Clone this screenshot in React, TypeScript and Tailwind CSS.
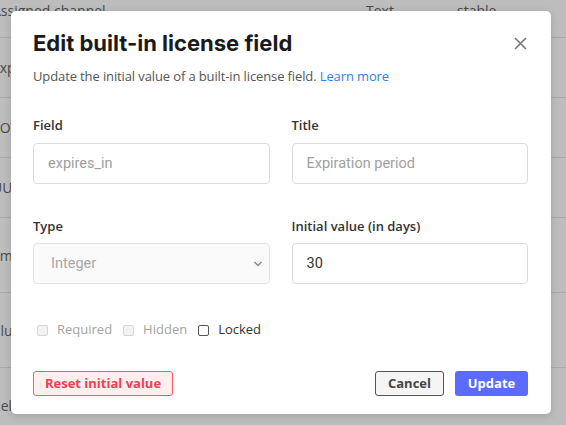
import React from "react";

const bgRows = [
  { h: "h-[38px]", name: "Assigned channel", type: "Text", status: "stable", top: true },
  { h: "h-[60px]", name: "Expires_in", type: "", status: "" },
  { h: "h-[60px]", name: "TOTP", type: "", status: "" },
  { h: "h-[60px]", name: "UUID", type: "", status: "" },
  { h: "h-[75px]", name: "Email", type: "", status: "" },
  { h: "h-[75px]", name: "Plugins", type: "", status: "" },
  { h: "h-[75px]", name: "Release", type: "", status: "" },
];

function Checkbox({ label, disabled }: { label: string; disabled?: boolean }) {
  return (
    <label className="flex items-center">
      <span
        className={`ml-[4px] mr-[9px] h-[11px] w-[11px] rounded-[2px] border ${
          disabled ? "border-[#d6d6d6] bg-[#f2f2f2]" : "border-[#555] bg-white"
        }`}
      />
      <span className={disabled ? "text-[#a3a3a3]" : "text-[#333]"}>{label}</span>
    </label>
  );
}

export default function App() {
  return (
    <div
      className="relative h-[425px] w-[566px] overflow-hidden bg-[#bdbdbd]"
      style={{ fontFamily: '"Open Sans", sans-serif' }}
    >
      {/* background table behind the overlay */}
      <div className="flex flex-col">
        {bgRows.map((r, i) => (
          <div
            key={i}
            className={`${r.h} flex border-b border-[#a9a9a9] text-[14px] text-[#4a4a4a] ${
              r.top ? "items-start" : "items-center"
            }`}
          >
            <span className="ml-[-8px] w-[374px]">{r.name}</span>
            <span className="w-[91px]">{r.type}</span>
            <span>{r.status}</span>
          </div>
        ))}
      </div>

      {/* modal */}
      <div className="absolute left-[11px] top-[11px] flex h-[403px] w-[540px] flex-col rounded-[5px] bg-white pl-[22px] pr-[23px] pt-[17px] shadow-[0_2px_8px_rgba(0,0,0,0.15)]">
        <div className="flex items-center justify-between">
          <h2
            className="text-[22px] font-bold leading-[30px] text-[#1a1a1a]"
            style={{ fontFamily: "Inter, sans-serif" }}
          >
            Edit built-in license field
          </h2>
          <svg width="13" height="13" viewBox="0 0 13 13" className="mr-[1px]">
            <path d="M1 1 L12 12 M12 1 L1 12" stroke="#777" strokeWidth="1.6" />
          </svg>
        </div>
        <p className="mt-[9px] text-[13px] leading-[18px] tracking-[-0.12px] text-[#555]">
          Update the initial value of a built-in license field.{" "}
          <span className="text-[#2f7fe8]">Learn more</span>
        </p>

        <div className="mt-[31px] grid grid-cols-2 gap-x-[22px]">
          <div>
            <div className="text-[13px] font-semibold leading-[18px] text-[#333]">Field</div>
            <div
              className="mt-[9px] flex h-[41px] items-center rounded-[4px] border border-[#dcdcdc] px-[14px] text-[14.5px] text-[#a0a0a0]"
              style={{ fontFamily: "Roboto, sans-serif" }}
            >
              expires_in
            </div>
          </div>
          <div>
            <div className="text-[13px] font-semibold leading-[18px] text-[#333]">Title</div>
            <div
              className="mt-[9px] flex h-[41px] items-center rounded-[4px] border border-[#dcdcdc] px-[14px] text-[14.5px] text-[#a0a0a0]"
              style={{ fontFamily: "Roboto, sans-serif" }}
            >
              Expiration period
            </div>
          </div>
          <div className="mt-[33px]">
            <div className="text-[13px] font-semibold leading-[18px] text-[#333]">Type</div>
            <div
              className="mt-[8px] flex h-[41px] items-center justify-between rounded-[4px] border border-[#e3e3e3] bg-[#fafafa] pl-[17px] pr-[6px] text-[14.5px] text-[#a8a8a8]"
              style={{ fontFamily: "Roboto, sans-serif" }}
            >
              <span>Integer</span>
              <svg width="10" height="6" viewBox="0 0 10 6">
                <path d="M1.5 1 L5 4.5 L8.5 1" fill="none" stroke="#888" strokeWidth="1.4" />
              </svg>
            </div>
          </div>
          <div className="mt-[33px]">
            <div className="text-[13px] font-semibold leading-[18px] text-[#333]">
              Initial value (in days)
            </div>
            <div
              className="mt-[8px] flex h-[41px] items-center rounded-[4px] border border-[#dcdcdc] px-[14px] text-[14.5px] text-[#333]"
              style={{ fontFamily: "Roboto, sans-serif" }}
            >
              30
            </div>
          </div>
        </div>

        <div className="mt-[37px] flex h-[18px] items-center gap-[7px] text-[13px]">
          <Checkbox label="Required" disabled />
          <Checkbox label="Hidden" disabled />
          <Checkbox label="Locked" />
        </div>

        <div className="mt-[32px] flex items-center text-[13px] font-bold">
          <button className="flex h-[25px] w-[140px] items-center justify-center rounded-[3px] border border-[#ff5a6a] bg-[#ffeeee] text-[#f43d50]">
            Reset initial value
          </button>
          <button className="ml-auto flex h-[25px] w-[69px] items-center justify-center rounded-[3px] border border-[#555] bg-[#f5f5f5] text-[#444]">
            Cancel
          </button>
          <button className="ml-[11px] flex h-[25px] w-[73px] items-center justify-center rounded-[3px] bg-[#5c6bff] text-white">
            Update
          </button>
        </div>
      </div>
    </div>
  );
}
